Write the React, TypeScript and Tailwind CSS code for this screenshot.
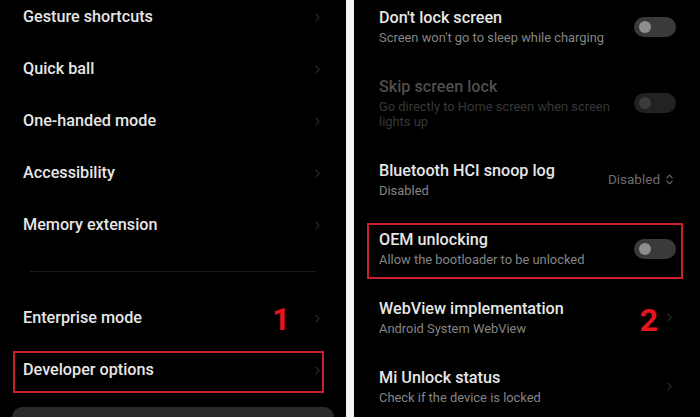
import React from 'react'
import { ChevronRight, ChevronsUpDown } from 'lucide-react'

const font = { fontFamily: 'Roboto, "Noto Sans", sans-serif' }

const Chevron = ({ className = '' }: { className?: string }) => (
  <ChevronRight size={13} strokeWidth={1.6} className={`text-[#4a4a4a] ${className}`} />
)

const Toggle = ({ dim = false }: { dim?: boolean }) => (
  <div
    className={`flex h-[20px] w-[42px] items-center rounded-full pl-[5px] ${
      dim ? 'bg-[#222]' : 'bg-[#3a3a3a]'
    }`}
  >
    <div className={`h-[12px] w-[12px] rounded-full ${dim ? 'bg-[#3c3c3c]' : 'bg-[#8e8e8e]'}`} />
  </div>
)

const leftItems = ['Gesture shortcuts', 'Quick ball', 'One-handed mode', 'Accessibility', 'Memory extension']

function LeftRow({ title, children }: { title: string; children?: React.ReactNode }) {
  return (
    <div className="flex h-[52px] items-center pl-[23px] pr-[22px]">
      <span className="text-[16.2px] font-medium text-[#e6e6e6]">{title}</span>
      <div className="flex-1" />
      {children}
      <Chevron />
    </div>
  )
}

interface RowProps {
  title: string
  sub: React.ReactNode
  dim?: boolean
  right?: React.ReactNode
}

function RightRow({ title, sub, dim, right }: RowProps) {
  return (
    <div className="flex items-center py-4 pl-[25px] pr-[24px]">
      <div className="flex-1">
        <div className={`text-[16.2px] font-medium leading-[20px] ${dim ? 'text-[#4e4e4e]' : 'text-[#e6e6e6]'}`}>
          {title}
        </div>
        <div className={`mt-[2px] text-[12.9px] leading-[15px] ${dim ? 'text-[#383838]' : 'text-[#858585]'}`}>
          {sub}
        </div>
      </div>
      {right}
    </div>
  )
}

export default function App() {
  return (
    <div className="flex h-[417px] w-[700px] overflow-hidden bg-[#f4f4f4]" style={font}>
      {/* left screen */}
      <div className="flex h-full w-[346px] flex-col bg-black">
        <div className="-mt-[9px]">
          {leftItems.map((t) => (
            <LeftRow key={t} title={t} />
          ))}
        </div>
        <div className="mx-[30px] mt-[20px] h-px bg-[#1c1c1c]" />
        <div className="mt-[21px]">
          <LeftRow title="Enterprise mode">
            <span className="mr-[21px] mt-[2px] text-[31px] font-bold leading-none text-[#e5141d]">1</span>
          </LeftRow>
        </div>
        <div className="relative">
          <LeftRow title="Developer options" />
          <div className="absolute bottom-[3px] left-[13px] right-[22px] top-[7px] border-2 border-[#c8202a]" />
        </div>
        <div className="mx-[12px] mt-[11px] h-[30px] rounded-t-[14px] bg-[#2a2a2a]" />
      </div>

      {/* gap */}
      <div className="w-[8px]" />

      {/* right screen */}
      <div className="h-full w-[346px] bg-black">
        <div className="-mt-[8px]">
          <RightRow
            title="Don't lock screen"
            sub="Screen won't go to sleep while charging"
            right={<Toggle />}
          />
          <RightRow
            title="Skip screen lock"
            dim
            sub={
              <>
                Go directly to Home screen when screen
                <br />
                lights up
              </>
            }
            right={<Toggle dim />}
          />
          <RightRow
            title="Bluetooth HCI snoop log"
            sub="Disabled"
            right={
              <div className="flex items-center gap-[3px] text-[13.5px] text-[#6c6c6c]">
                Disabled
                <ChevronsUpDown size={13} strokeWidth={2} />
              </div>
            }
          />
          <div className="relative">
            <RightRow
              title="OEM unlocking"
              sub="Allow the bootloader to be unlocked"
              right={<Toggle />}
            />
            <div className="absolute bottom-[4px] left-[13px] right-[17px] top-[9px] border-2 border-[#c8202a]" />
          </div>
          <RightRow
            title="WebView implementation"
            sub="Android System WebView"
            right={
              <div className="flex items-center">
                <span className="mr-[5px] mt-[4px] text-[32px] font-bold leading-none text-[#e5141d]">2</span>
                <Chevron />
              </div>
            }
          />
          <RightRow
            title="Mi Unlock status"
            sub="Check if the device is locked"
            right={<Chevron />}
          />
        </div>
      </div>
    </div>
  )
}
